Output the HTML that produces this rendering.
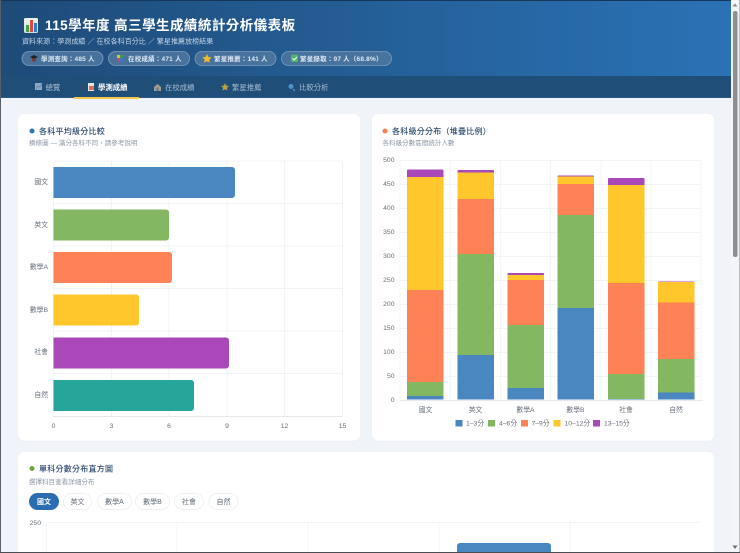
<!DOCTYPE html>
<html lang="zh-Hant"><head><meta charset="utf-8"><title>115學年度 高三學生成績統計分析儀表板</title>
<style>
html,body{margin:0;padding:0;width:740px;height:553px;overflow:hidden;background:#f0f4f8}
svg{display:block;position:absolute;left:0;top:0;filter:blur(.35px)}
text{font-family:"Liberation Sans","Noto Sans CJK TC",sans-serif}
</style></head><body>
<svg width="740" height="553" viewBox="0 0 740 553" xmlns="http://www.w3.org/2000/svg">
<defs>
<linearGradient id="hd" x1="0" y1="0" x2="1" y2="0"><stop offset="0" stop-color="#1e4b78"/><stop offset="1" stop-color="#2a72b5"/></linearGradient>
<linearGradient id="ic" x1="0" y1="0" x2="0" y2="1"><stop offset="0" stop-color="#f0f4f4"/><stop offset="1" stop-color="#cfdcdc"/></linearGradient>
</defs>
<rect width="740" height="553" fill="#f0f4f8"/>
<!-- header -->
<rect x="0" y="0" width="731" height="77" fill="url(#hd)"/>
<rect x="0" y="76" width="731" height="22" fill="#1f4e79"/>
<rect x="0" y="97" width="731" height="1" fill="#2c5a82"/>
<rect x="0" y="0" width="731" height="1" fill="#17375a"/>
<!-- title icon -->
<rect x="24" y="18" width="14" height="15" rx="1.5" fill="url(#ic)"/>
<rect x="26" y="25" width="3" height="7" fill="#3fa34d"/><rect x="30" y="20" width="3" height="12" fill="#e0483e"/><rect x="34" y="23" width="3" height="9" fill="#2f7fd0"/>
<text x="45" y="30" font-size="13.500" font-weight="700" fill="#fff" letter-spacing=".45">115學年度 高三學生成績統計分析儀表板</text>
<text x="22" y="43.500" font-size="7" fill="#c4d5e6" letter-spacing=".05">資料來源：學測成績 ／ 在校各科百分比 ／ 繁星推薦放榜結果</text>
<!-- pills -->
<g fill="#4d769e" fill-opacity=".9" stroke="#7c9dbd" stroke-width=".8">
<rect x="22" y="51.500" width="81" height="14" rx="7"/><rect x="108.500" y="51.500" width="81" height="14" rx="7"/><rect x="195" y="51.500" width="81" height="14" rx="7"/><rect x="281.500" y="51.500" width="110" height="14" rx="7"/>
</g>
<path d="M30 57l4-2 4 2-4 2z" fill="#222"/><path d="M32 58.500v3h4v-3z" fill="#7a3b3b"/>
<rect x="117" y="55" width="3" height="3" fill="#d9c23a"/><rect x="120" y="55" width="3" height="3" fill="#3f9a5a"/><rect x="117" y="58" width="3" height="4" fill="#c04a6a"/><rect x="120" y="58" width="3" height="4" fill="#3a78c8"/>
<path d="M207 54l1.400 3 3.300.4-2.400 2.200.6 3.200-2.900-1.600-2.900 1.600.6-3.200-2.400-2.200 3.300-.4z" fill="#f2b92c"/>
<rect x="291" y="54.500" width="7" height="7.500" rx="1" fill="#4cb868"/><path d="M292.500 58.300l1.700 1.700 2.700-3" fill="none" stroke="#fff" stroke-width="1"/>
<g font-size="6.500" font-weight="700" fill="#dfe9f3" letter-spacing=".2">
<text x="41" y="61">學測查詢：485 人</text><text x="128" y="61">在校成績：471 人</text><text x="214" y="61">繁星推薦：141 人</text><text x="300" y="61">繁星錄取：97 人（68.8%）</text>
</g>
<!-- nav -->
<rect x="35" y="83" width="7" height="7" fill="#8fa8c4"/><path d="M36 89l2-3 2 1 2-3" stroke="#5d7ea0" fill="none" stroke-width=".8"/>
<rect x="88" y="83" width="6" height="8" fill="#f3e6dc"/><rect x="89" y="86" width="5" height="4" fill="#e0705a"/>
<path d="M154 91v-4l3.500-3 3.500 3v4z" fill="#a89a86"/><rect x="156.500" y="87.500" width="2" height="3.500" fill="#5b7a9a"/>
<path d="M225 83l1.200 2.600 2.800.3-2.100 1.900.6 2.800-2.500-1.400-2.500 1.400.6-2.800-2.100-1.900 2.800-.3z" fill="#c0a040"/>
<circle cx="291" cy="86.500" r="2.500" fill="#4f94c8"/><path d="M293 89l2 2" stroke="#7a9ab8" stroke-width="1"/>
<g font-size="7.400" fill="#a9bdd2">
<text x="45.500" y="90">總覽</text><text x="165" y="90">在校成績</text><text x="232" y="90">繁星推薦</text><text x="299" y="90">比較分析</text>
</g>
<text x="98" y="90" font-size="7.400" font-weight="700" fill="#fff">學測成績</text>
<rect x="74" y="97" width="65" height="2" fill="#f2c94c"/>
<!-- cards -->
<g fill="#fff" stroke="#e9eef4" stroke-width=".6">
<rect x="17.500" y="113.500" width="343" height="327.500" rx="7"/>
<rect x="371.500" y="113.500" width="343" height="327.500" rx="7"/>
<rect x="17.500" y="451.500" width="697" height="130" rx="7"/>
</g>
<!-- left card head -->
<circle cx="32" cy="131" r="2.500" fill="#2e75b6"/>
<text x="39" y="134" font-size="8" font-weight="500" fill="#2c4a6e" letter-spacing=".25">各科平均級分比較</text>
<text x="29" y="145" font-size="6.500" fill="#8b97a5" letter-spacing=".05">橫條圖 — 滿分各科不同，請參考說明</text>
<!-- left chart grid -->
<g stroke="#eceff3" stroke-width=".7" fill="none">
<path d="M53.500 161V416M111.500 161V416M169 161V416M227 161V416M284.500 161V416M342.500 161V416"/>
<path d="M53 161H342.500M53 203.500H342.500M53 246H342.500M53 288.500H342.500M53 331H342.500M53 373.500H342.500"/>
<path d="M53 416.500H342.500" stroke="#dde2e8"/>
</g>
<g>
<path d="M53.500 167H232a3 3 0 0 1 3 3v25a3 3 0 0 1-3 3H53.500z" fill="#4a86bf"/>
<path d="M53.500 209.500H166a3 3 0 0 1 3 3v25a3 3 0 0 1-3 3H53.500z" fill="#84b761"/>
<path d="M53.500 252H169a3 3 0 0 1 3 3v25a3 3 0 0 1-3 3H53.500z" fill="#ff8257"/>
<path d="M53.500 294.500H136a3 3 0 0 1 3 3v25a3 3 0 0 1-3 3H53.500z" fill="#ffc72c"/>
<path d="M53.500 337.500H226a3 3 0 0 1 3 3v25a3 3 0 0 1-3 3H53.500z" fill="#aa47b9"/>
<path d="M53.500 380H191a3 3 0 0 1 3 3v25a3 3 0 0 1-3 3H53.500z" fill="#26a69a"/>
</g>
<g font-size="6.800" fill="#666f7a" text-anchor="end">
<text x="48" y="184">國文</text><text x="48" y="227">英文</text><text x="48" y="269">數學A</text><text x="48" y="312">數學B</text><text x="48" y="354">社會</text><text x="48" y="397">自然</text>
</g>
<g font-size="6.800" fill="#666f7a" text-anchor="middle">
<text x="53.500" y="428">0</text><text x="111.500" y="428">3</text><text x="169" y="428">6</text><text x="227" y="428">9</text><text x="284.500" y="428">12</text><text x="342.500" y="428">15</text>
</g>
<!-- right card head -->
<circle cx="385" cy="131" r="2.500" fill="#ff7a50"/>
<text x="392" y="134" font-size="8" font-weight="500" fill="#2c4a6e" letter-spacing=".25">各科級分分布（堆疊比例）</text>
<text x="382.500" y="145" font-size="6.500" fill="#8b97a5" letter-spacing=".05">各科級分數區間統計人數</text>
<!-- right grid -->
<g stroke="#eef1f4" stroke-width=".7" fill="none">
<path d="M400 160.500H700M400 184.500H700M400 208.500H700M400 232.500H700M400 256.500H700M400 280.500H700M400 304.500H700M400 328.500H700M400 352.500H700M400 376.500H700"/>
<path d="M400 160V400M450.500 160V400M500.500 160V400M550.500 160V400M601 160V400M651 160V400M701 160V400"/>
<path d="M400 400.500H703" stroke="#dde2e8"/>
</g>
<g font-size="6.800" fill="#666f7a" text-anchor="end">
<text x="394.500" y="162">500</text><text x="394.500" y="186">450</text><text x="394.500" y="210">400</text><text x="394.500" y="234">350</text><text x="394.500" y="258">300</text><text x="394.500" y="282">250</text><text x="394.500" y="306">200</text><text x="394.500" y="330">150</text><text x="394.500" y="354">100</text><text x="394.500" y="378">50</text><text x="394.500" y="402">0</text>
</g>
<!-- stacked bars -->
<g>
<rect x="407" y="169.500" width="36.500" height="230" fill="#aa47b9" rx="1"/><rect x="407" y="177" width="36.500" height="222.500" fill="#ffc72c"/><rect x="407" y="290" width="36.500" height="109.500" fill="#ff8257"/><rect x="407" y="382" width="36.500" height="17.500" fill="#84b761"/><rect x="407" y="396" width="36.500" height="3.500" fill="#4a86bf"/>
<rect x="457.500" y="170" width="36.500" height="229.500" fill="#aa47b9" rx="1"/><rect x="457.500" y="172.500" width="36.500" height="227" fill="#ffc72c"/><rect x="457.500" y="199" width="36.500" height="200.500" fill="#ff8257"/><rect x="457.500" y="254" width="36.500" height="145.500" fill="#84b761"/><rect x="457.500" y="355" width="36.500" height="44.500" fill="#4a86bf"/>
<rect x="507.500" y="273" width="36.500" height="126.500" fill="#aa47b9" rx="1"/><rect x="507.500" y="275" width="36.500" height="124.500" fill="#ffc72c"/><rect x="507.500" y="280" width="36.500" height="119.500" fill="#ff8257"/><rect x="507.500" y="325" width="36.500" height="74.500" fill="#84b761"/><rect x="507.500" y="388" width="36.500" height="11.500" fill="#4a86bf"/>
<rect x="557.500" y="175.500" width="36.500" height="224" fill="#aa47b9" rx="1"/><rect x="557.500" y="176.500" width="36.500" height="223" fill="#ffc72c"/><rect x="557.500" y="184" width="36.500" height="215.500" fill="#ff8257"/><rect x="557.500" y="215" width="36.500" height="184.500" fill="#84b761"/><rect x="557.500" y="308" width="36.500" height="91.500" fill="#4a86bf"/>
<rect x="608" y="178" width="36.500" height="221.500" fill="#aa47b9" rx="1"/><rect x="608" y="185" width="36.500" height="214.500" fill="#ffc72c"/><rect x="608" y="283" width="36.500" height="116.500" fill="#ff8257"/><rect x="608" y="374" width="36.500" height="25.500" fill="#84b761"/><rect x="608" y="399" width="36.500" height=".5" fill="#4a86bf"/>
<rect x="658" y="281.500" width="36.500" height="118" fill="#aa47b9" rx="1"/><rect x="658" y="282" width="36.500" height="117.500" fill="#ffc72c"/><rect x="658" y="302.500" width="36.500" height="97" fill="#ff8257"/><rect x="658" y="359" width="36.500" height="40.500" fill="#84b761"/><rect x="658" y="392.500" width="36.500" height="7" fill="#4a86bf"/>
</g>
<g font-size="6.800" fill="#666f7a" text-anchor="middle">
<text x="425.500" y="412">國文</text><text x="475.500" y="412">英文</text><text x="525.500" y="412">數學A</text><text x="575.500" y="412">數學B</text><text x="626" y="412">社會</text><text x="676" y="412">自然</text>
</g>
<!-- legend -->
<rect x="455.500" y="420" width="7" height="6.500" fill="#4a86bf"/><rect x="488" y="420" width="7" height="6.500" fill="#84b761"/><rect x="521" y="420" width="7" height="6.500" fill="#ff8257"/><rect x="553.500" y="420" width="7" height="6.500" fill="#ffc72c"/><rect x="593" y="420" width="7" height="6.500" fill="#aa47b9"/>
<g font-size="6.800" fill="#666f7a">
<text x="466" y="425.500">1–3分</text><text x="499" y="425.500">4–6分</text><text x="531.500" y="425.500">7–9分</text><text x="564.500" y="425.500">10–12分</text><text x="604" y="425.500">13–15分</text>
</g>
<!-- third card -->
<circle cx="32" cy="468.500" r="2.500" fill="#6aa83c"/>
<text x="39" y="471.500" font-size="8" font-weight="500" fill="#2c4a6e" letter-spacing=".25">單科分數分布直方圖</text>
<text x="29" y="484" font-size="6.500" fill="#8b97a5" letter-spacing=".05">選擇科目查看詳細分布</text>
<rect x="29" y="493" width="30" height="17" rx="8.500" fill="#2a6db0"/>
<g fill="#fff" stroke="#e8edf2" stroke-width=".7">
<rect x="63.500" y="493.500" width="28" height="16" rx="8"/><rect x="97.500" y="493.500" width="34" height="16" rx="8"/><rect x="135.500" y="493.500" width="34" height="16" rx="8"/><rect x="174.500" y="493.500" width="29" height="16" rx="8"/><rect x="209" y="493.500" width="29" height="16" rx="8"/>
</g>
<text x="44" y="504" font-size="7" font-weight="700" fill="#fff" text-anchor="middle">國文</text>
<g font-size="7" fill="#5f6b78" text-anchor="middle">
<text x="77.500" y="504">英文</text><text x="114.500" y="504">數學A</text><text x="152.500" y="504">數學B</text><text x="189" y="504">社會</text><text x="223.500" y="504">自然</text>
</g>
<text x="41" y="525" font-size="6.800" fill="#666f7a" text-anchor="end">250</text>
<g stroke="#eef1f4" stroke-width=".7" fill="none"><path d="M46 522.500H700M46.500 522V553M177 522V553M308 522V553M439 522V553M570 522V553"/></g>
<path d="M457 553V546a3 3 0 0 1 3-3h88a3 3 0 0 1 3 3V553z" fill="#4a86bf"/>
<!-- scrollbar & frame -->
<rect x="731" y="0" width="9" height="553" fill="#f4f5f8"/>
<rect x="733" y="11" width="4.500" height="246" rx="2" fill="#8d8f93"/>
<path d="M735 3.500l2.500 3h-5z" fill="#8a8c90"/><path d="M735 549l2.500-3.500h-5z" fill="#6a6c70"/>
<rect x="739" y="0" width="1" height="553" fill="#b9bcc2"/>
<rect x="0" y="0" width="1" height="553" fill="#5a6068"/>
<rect x="0" y="552" width="740" height="1" fill="#4a4d52"/>
</svg>
</body></html>
